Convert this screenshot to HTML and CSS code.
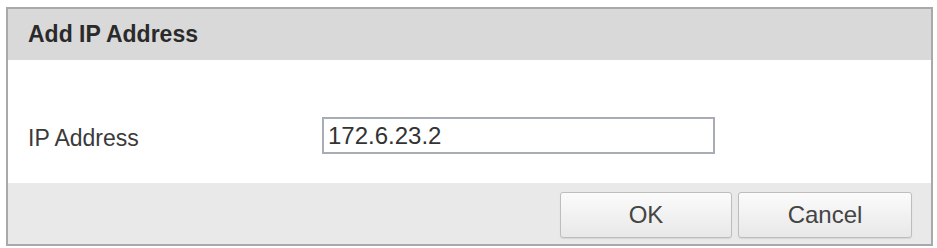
FILE: index.html
```html
<!DOCTYPE html>
<html>
<head>
<meta charset="utf-8">
<link rel="stylesheet" href="styles.css">
</head>
<body>
<div class="dialog">
  <div class="dialog-header">Add IP Address</div>
  <div class="dialog-body">
    <div class="field-row">
      <label class="field-label" for="ip">IP Address</label>
      <input class="field-input" id="ip" type="text" value="172.6.23.2">
    </div>
  </div>
  <div class="dialog-footer">
    <button class="btn">OK</button>
    <button class="btn btn-wide">Cancel</button>
  </div>
</div>
</body>
</html>
```
FILE: styles.css
```css
html, body {
  margin: 0;
  background: #ffffff;
}
body {
  padding: 7px 4px 0 6px;
  font-family: "Liberation Sans", Arial, sans-serif;
  color: #333333;
}
.dialog {
  box-sizing: border-box;
  width: 927px;
  height: 239px;
  border: 2px solid #a9a9a9;
  display: flex;
  flex-direction: column;
  background: #ffffff;
}
.dialog-header {
  height: 51px;
  flex: none;
  background: #d9d9d9;
  display: flex;
  align-items: center;
  padding-left: 20px;
  font-size: 23px;
  font-weight: bold;
  color: #2a2a2a;
}
.dialog-body {
  height: 123px;
  flex: none;
  padding: 57px 0 0 20px;
  box-sizing: border-box;
}
.field-row {
  display: flex;
  align-items: center;
}
.field-label {
  width: 294px;
  flex: none;
  font-size: 23px;
  color: #3a3a3a;
  padding-top: 6px;
}
.field-input {
  box-sizing: border-box;
  width: 393px;
  height: 37px;
  margin: 0;
  border: 2px solid #a6adb5;
  padding: 0 4px;
  font-family: "Liberation Sans", Arial, sans-serif;
  font-size: 24px;
  color: #333333;
  background: #ffffff;
  outline: none;
}
.dialog-footer {
  flex: 1;
  background: #e9e9e9;
  display: flex;
  justify-content: flex-end;
  align-items: flex-start;
  gap: 6px;
  padding: 9px 19px 0 0;
}
.btn {
  box-sizing: border-box;
  width: 172px;
  height: 46px;
  margin: 0;
  border: 1px solid #bdbdbd;
  border-radius: 3px;
  background: linear-gradient(#fbfbfb, #e8e8e8);
  font-family: "Liberation Sans", Arial, sans-serif;
  font-size: 24px;
  color: #444444;
  padding: 0;
  box-shadow: 0 1px 1px rgba(0,0,0,0.08);
}
.btn-wide {
  width: 174px;
}
```
